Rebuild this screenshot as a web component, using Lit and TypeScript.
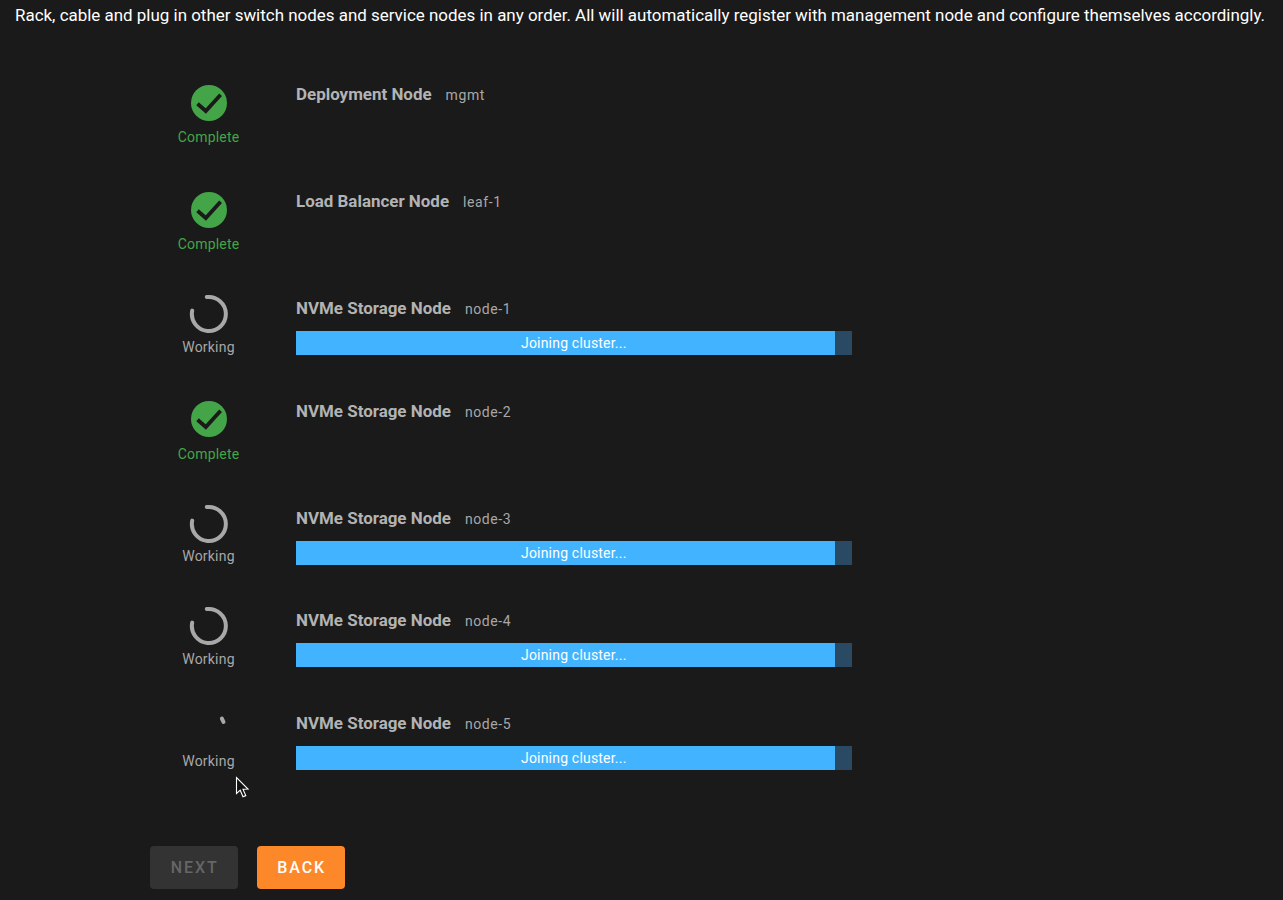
import { LitElement, html, css, svg } from "lit";
import { customElement } from "lit/decorators.js";

type Row = { title: string; node: string; state: "complete" | "working" | "starting" };

const ROWS: Row[] = [
  { title: "Deployment Node", node: "mgmt", state: "complete" },
  { title: "Load Balancer Node", node: "leaf-1", state: "complete" },
  { title: "NVMe Storage Node", node: "node-1", state: "working" },
  { title: "NVMe Storage Node", node: "node-2", state: "complete" },
  { title: "NVMe Storage Node", node: "node-3", state: "working" },
  { title: "NVMe Storage Node", node: "node-4", state: "working" },
  { title: "NVMe Storage Node", node: "node-5", state: "starting" },
];

@customElement("app-root")
export class AppRoot extends LitElement {
  static styles = css`
    :host {
      display: block;
      position: relative;
      width: 1283px;
      height: 900px;
      overflow: hidden;
      background: #1a1a1a;
      font-family: Roboto, "Liberation Sans", sans-serif;
      color: #b3b3b3;
    }
    .intro {
      margin: 0;
      padding: 6px 0 0 15px;
      height: 24px;
      font-size: 16.95px;
      line-height: 19px;
      color: #fff;
      white-space: nowrap;
    }
    .rows {
      display: flex;
      flex-direction: column;
      padding: 45px 0 0 150px;
      height: 793px;
      box-sizing: border-box;
    }
    .row {
      display: flex;
      flex: none;
      gap: 29px;
      height: 107px;
    }
    .row.working {
      height: 102.5px;
    }
    .status {
      width: 117px;
      display: flex;
      flex-direction: column;
      align-items: center;
      font-size: 14px;
      line-height: 16px;
      letter-spacing: 0.2px;
      color: #a8a8a8;
    }
    .status.complete {
      color: #43a548;
    }
    .icon {
      display: block;
      margin-top: 8.5px;
      width: 38px;
      height: 38px;
    }
    .working .icon {
      margin-top: 5px;
      width: 40px;
      height: 40px;
    }
    .status span {
      margin-top: 7.5px;
    }
    .working .status span {
      margin-top: 4.5px;
    }
    .main {
      padding-top: 10px;
      width: 555.5px;
    }
    .heading {
      display: flex;
      align-items: baseline;
      gap: 14px;
      height: 19px;
      line-height: 19px;
    }
    .title {
      font-size: 16.95px;
      font-weight: 700;
      color: #b3b3b3;
    }
    .node {
      font-size: 14px;
      color: #a8a8a8;
      letter-spacing: 0.6px;
    }
    .bar {
      position: relative;
      margin-top: 13px;
      height: 24px;
      background: #2a4a64;
    }
    .fill {
      height: 100%;
      background: #42b4ff;
    }
    .bar-label {
      position: absolute;
      inset: 0;
      text-align: center;
      font-size: 14px;
      line-height: 24px;
      color: #fff;
      letter-spacing: 0.2px;
    }
    .actions {
      display: flex;
      gap: 19px;
      padding: 23px 0 0 150px;
    }
    button {
      height: 43px;
      border: 0;
      border-radius: 4px;
      padding: 0 0 0 2px;
      font-family: inherit;
      font-size: 16px;
      font-weight: 500;
      letter-spacing: 1.9px;
    }
    .next {
      width: 87.5px;
      background: #333333;
      color: #666666;
    }
    .back {
      width: 88.5px;
      background: #fc882a;
      color: #fff;
    }
    .cursor {
      position: absolute;
      left: 235px;
      top: 776px;
      width: 16px;
      height: 23px;
    }
  `;

  private icon(state: Row["state"]) {
    if (state === "complete") {
      return html`<svg class="icon" viewBox="0 0 38 38">
        <circle cx="19" cy="19" r="18" fill="#43a548"></circle>
        <path d="M7.5 19.8 L15.8 27 L30.6 10.8" fill="none" stroke="#1a1a1a" stroke-width="3.8"></path>
      </svg>`;
    }
    if (state === "working") {
      return html`<svg class="icon" viewBox="0 0 40 40">
        <path d="M17.8 3.1 A17 17 0 1 1 3.2 16.6" fill="none" stroke="#a8a8a8" stroke-width="4" stroke-linecap="round"></path>
      </svg>`;
    }
    return html`<svg class="icon" viewBox="0 0 40 40">
      ${svg`<path d="M32.9 9.6 L34.5 13" fill="none" stroke="#a8a8a8" stroke-width="4" stroke-linecap="round"></path>`}
    </svg>`;
  }

  render() {
    return html`
      <p class="intro">Rack, cable and plug in other switch nodes and service nodes in any order. All will automatically register with management node and configure themselves accordingly.</p>
      <div class="rows">
        ${ROWS.map((r) => {
          const complete = r.state === "complete";
          return html`<div class="row ${complete ? "" : "working"}">
            <div class="status ${complete ? "complete" : ""}">
              ${this.icon(r.state)}
              <span>${complete ? "Complete" : "Working"}</span>
            </div>
            <div class="main">
              <div class="heading">
                <span class="title">${r.title}</span>
                <span class="node">${r.node}</span>
              </div>
              ${complete
                ? ""
                : html`<div class="bar">
                    <div class="fill" style="width: ${(539 / 555.5) * 100}%"></div>
                    <div class="bar-label">Joining cluster...</div>
                  </div>`}
            </div>
          </div>`;
        })}
      </div>
      <div class="actions">
        <button class="next">NEXT</button>
        <button class="back">BACK</button>
      </div>
      <svg class="cursor" viewBox="0 0 16 23">
        <path d="M1.5 1.5 L1.5 17.5 L5.2 14.2 L8 20.8 L10.8 19.6 L8 13.2 L13 13 Z" fill="#111" stroke="#fff" stroke-width="1.1" stroke-linejoin="miter"></path>
      </svg>
    `;
  }
}
